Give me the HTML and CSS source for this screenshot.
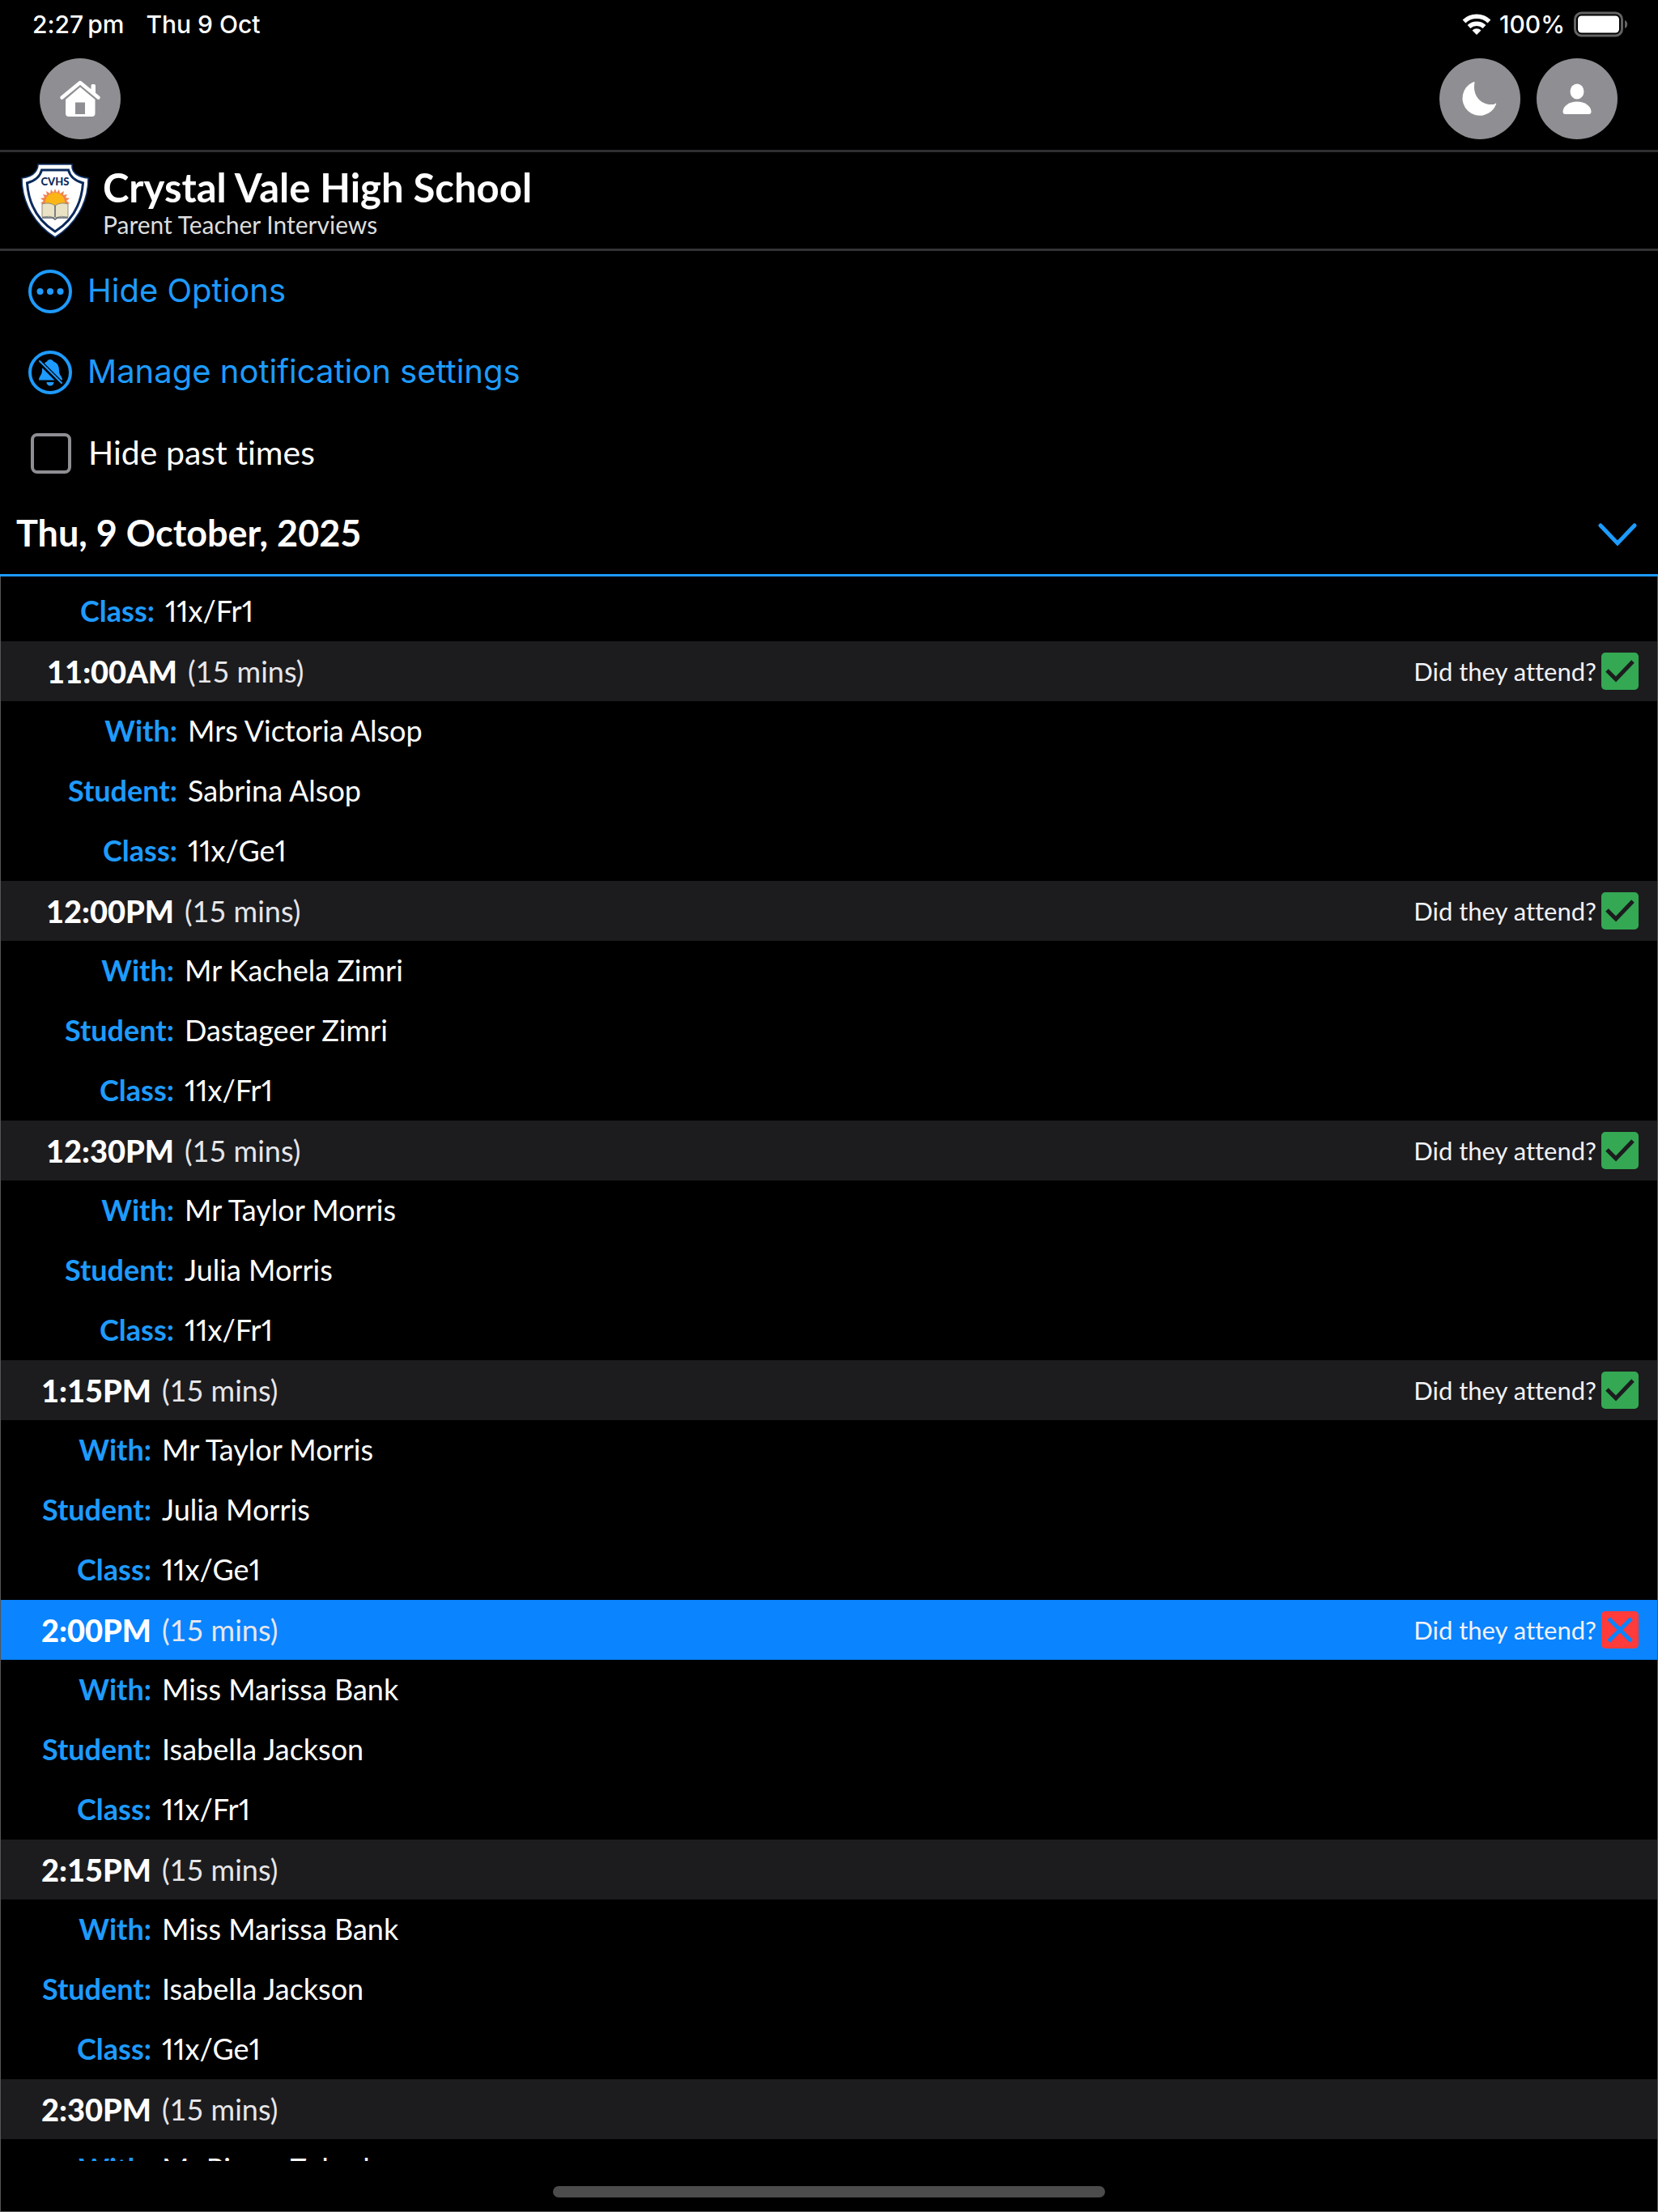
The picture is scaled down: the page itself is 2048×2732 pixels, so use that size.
FILE: index.html
```
<!DOCTYPE html>
<html lang="en">
<head>
    <meta charset="utf-8">
    <meta name="viewport" content="width=device-width,initial-scale=1">
    <title>Parent Teacher Interviews</title>
    <link rel="stylesheet" href="styles.css">
</head>
<body>
<div class="statusbar">
    <span class="clock">2:27&#8198;pm</span>
    <span class="day">Thu 9 Oct</span>
    <svg class="wifi" viewBox="0 0 36 27" width="36" height="27">
        <path d="M2.500 9.500a22.500 22.500 0 0 1 31 0M8.500 16a14 14 0 0 1 19 0" fill="none" stroke="#fff" stroke-width="5.500"/>
        <path d="M18 26l-5.500-5.500a8 8 0 0 1 11 0z" fill="#fff"/>
    </svg>
    <span class="percent">100%</span>
    <svg class="battery" viewBox="0 0 68 32" width="68" height="32">
        <rect x="1.500" y="2" width="58" height="28" rx="8" fill="none" stroke="#636363" stroke-width="3"/>
        <rect x="5" y="5.500" width="51" height="21" rx="4.500" fill="#fff"/>
        <path d="M63 11a5.500 5.500 0 0 1 0 10z" fill="#636363"/>
    </svg>
</div>

<nav class="toolbar">
    <button class="round" aria-label="Home">
        <svg viewBox="0 0 100 100" width="100" height="100">
            <path d="M27.500 48.500L50 30l22.500 18.500" fill="none" stroke="#fff" stroke-width="4.500" stroke-linecap="round" stroke-linejoin="round"/>
            <path d="M63.500 34q0-2 1.500-2h2q2 0 2 2v11l-5.500-4.500z" fill="#fff"/>
            <path d="M50 35.500L68.500 51v17q0 4-4 4h-28.500q-4 0-4-4V51z" fill="#fff"/>
            <path d="M44 54.500h12V69H44z" fill="#8e8e93"/>
        </svg>
    </button>
    <button class="round push" aria-label="Dark mode">
        <svg viewBox="0 0 100 100" width="100" height="100">
            <path d="M41.500 29.500q2-1 2 .5c-3 15 7 28 22 27q3 0 4-1.500 1-.5.500 1.500A21.500 21.500 0 1 1 41.500 29.500z" fill="#fff"/>
        </svg>
    </button>
    <button class="round" aria-label="Account">
        <svg viewBox="0 0 100 100" width="100" height="100">
            <ellipse cx="50" cy="41" rx="8.500" ry="9.500" fill="#fff"/>
            <path d="M32.500 66c0-7 8-12.500 17.500-12.500S67.500 59 67.500 66q0 3-3 3h-29q-3 0-3-3z" fill="#fff"/>
        </svg>
    </button>
</nav>

<header class="school">
    <svg class="crest" viewBox="0 0 84 92" width="84" height="92">
        <path d="M21 1h42v4q2 11 20 13C83 50 66 76 42 91 18 76 1 50 1 18 19 16 21 5 21 1z" fill="#fff" stroke="#12356b" stroke-width="1.500"/>
        <path d="M25.500 8h33q3 12 18 16c-2 28-14 47-34.500 60C21.500 71 9.500 52 7.500 24q15-4 18-16z" fill="#fff" stroke="#0b2a5b" stroke-width="3"/>
        <path d="M42 31l2 5 3-4 1 5 5-3-1 5 5-1-2 4 5 1-4 3 4 3-5 2 3 4H26l3-4-5-2 4-3-4-3 5-1-2-4 5 1-1-5 5 3 1-5 3 4z" fill="#f08350"/>
        <circle cx="42" cy="48" r="12" fill="#fbb615"/>
        <path d="M26 50q9-3 16 2 7-5 16-2v16q-9-2-16 1-7-3-16-1z" fill="#e9e2c4" stroke="#8e8b7c"/>
        <path d="M42 52v14M26 67h13l3 2 3-2h13" fill="none" stroke="#55606c" stroke-width="1.500"/>
        <text x="42" y="27" text-anchor="middle" class="crest-text">CVHS</text>
    </svg>
    <div>
        <h1>Crystal Vale High School</h1>
        <p>Parent Teacher Interviews</p>
    </div>
</header>

<div class="options">
    <button class="option">
        <svg viewBox="0 0 54 54" width="54" height="54">
            <circle cx="27" cy="27" r="25" fill="none" stroke="#1e9bff" stroke-width="4"/>
            <g fill="#1e9bff"><circle cx="14.500" cy="27" r="4"/><circle cx="27" cy="27" r="4"/><circle cx="39.500" cy="27" r="4"/></g>
        </svg>
        <span>Hide Options</span>
    </button>
    <button class="option">
        <svg viewBox="0 0 54 54" width="54" height="54">
            <circle cx="27" cy="27" r="25" fill="none" stroke="#1e9bff" stroke-width="4"/>
            <path d="M27 11c2 0 3.500 1 4 2.500 5 1.500 7 6 7 11 0 7 4 7 4 12H13c0-5 4-6 4-12 0-5 2-9.500 6-11 .5-1.500 2-2.500 4-2.500zM22.500 39h9a4.500 4.500 0 0 1-9 0z" fill="#1e9bff"/>
            <path d="M12 12l29 29" stroke="#000" stroke-width="6"/>
            <path d="M14 13l27 27" stroke="#1e9bff" stroke-width="2" stroke-linecap="round"/>
        </svg>
        <span>Manage notification settings</span>
    </button>
    <label class="option past"><input type="checkbox"><span>Hide past times</span></label>
</div>

<button class="date">
    <span>Thu, 9 October, 2025</span>
    <svg viewBox="0 0 48 30" width="48" height="30">
        <path d="M3 4l21 22L45 4" fill="none" stroke="#1e9bff" stroke-width="5" stroke-linecap="round"/>
    </svg>
</button>

<main class="list">
    <section class="slot am">
        <dl>
            <dt>Class:</dt><dd>11x/Fr1</dd>
        </dl>
    </section>
    <section class="slot long am">
        <div class="bar">
            <h2>11:00AM</h2><span class="mins">(15 mins)</span>
            <label class="attend">Did they attend?
                <span class="tick"><input type="checkbox" checked><svg viewBox="0 0 46 46"><path d="M7 22l11 11 21-22"/></svg></span>
            </label>
        </div>
        <dl>
            <dt>With:</dt><dd>Mrs Victoria Alsop</dd>
            <dt>Student:</dt><dd>Sabrina Alsop</dd>
            <dt>Class:</dt><dd>11x/Ge1</dd>
        </dl>
    </section>
    <section class="slot long">
        <div class="bar">
            <h2>12:00PM</h2><span class="mins">(15 mins)</span>
            <label class="attend">Did they attend?
                <span class="tick"><input type="checkbox" checked><svg viewBox="0 0 46 46"><path d="M7 22l11 11 21-22"/></svg></span>
            </label>
        </div>
        <dl>
            <dt>With:</dt><dd>Mr Kachela Zimri</dd>
            <dt>Student:</dt><dd>Dastageer Zimri</dd>
            <dt>Class:</dt><dd>11x/Fr1</dd>
        </dl>
    </section>
    <section class="slot long">
        <div class="bar">
            <h2>12:30PM</h2><span class="mins">(15 mins)</span>
            <label class="attend">Did they attend?
                <span class="tick"><input type="checkbox" checked><svg viewBox="0 0 46 46"><path d="M7 22l11 11 21-22"/></svg></span>
            </label>
        </div>
        <dl>
            <dt>With:</dt><dd>Mr Taylor Morris</dd>
            <dt>Student:</dt><dd>Julia Morris</dd>
            <dt>Class:</dt><dd>11x/Fr1</dd>
        </dl>
    </section>
    <section class="slot">
        <div class="bar">
            <h2>1:15PM</h2><span class="mins">(15 mins)</span>
            <label class="attend">Did they attend?
                <span class="tick"><input type="checkbox" checked><svg viewBox="0 0 46 46"><path d="M7 22l11 11 21-22"/></svg></span>
            </label>
        </div>
        <dl>
            <dt>With:</dt><dd>Mr Taylor Morris</dd>
            <dt>Student:</dt><dd>Julia Morris</dd>
            <dt>Class:</dt><dd>11x/Ge1</dd>
        </dl>
    </section>
    <section class="slot now">
        <div class="bar">
            <h2>2:00PM</h2><span class="mins">(15 mins)</span>
            <label class="attend">Did they attend?
                <span class="tick"><input type="checkbox"><svg viewBox="0 0 46 46"><path d="M9 9l28 28M37 9L9 37"/></svg></span>
            </label>
        </div>
        <dl>
            <dt>With:</dt><dd>Miss Marissa Bank</dd>
            <dt>Student:</dt><dd>Isabella Jackson</dd>
            <dt>Class:</dt><dd>11x/Fr1</dd>
        </dl>
    </section>
    <section class="slot">
        <div class="bar">
            <h2>2:15PM</h2><span class="mins">(15 mins)</span>
        </div>
        <dl>
            <dt>With:</dt><dd>Miss Marissa Bank</dd>
            <dt>Student:</dt><dd>Isabella Jackson</dd>
            <dt>Class:</dt><dd>11x/Ge1</dd>
        </dl>
    </section>
    <section class="slot">
        <div class="bar">
            <h2>2:30PM</h2><span class="mins">(15 mins)</span>
        </div>
        <dl>
            <dt>With:</dt><dd>Mr Pierre Zebedee</dd>
        </dl>
    </section>
</main>

<footer class="home"><span></span></footer>
</body>
</html>
```
FILE: styles.css
```
*{box-sizing:border-box;}
body{display:flex;flex-direction:column;height:100vh;margin:0;overflow:hidden;background:#000;color:#fff;font-family:Lato,"Open Sans",sans-serif;font-size:36px;font-variant-ligatures:none;}
h1,h2,p,dl,dd{margin:0;}
svg{display:block;flex:none;}
button{border:0;padding:0;background:none;cursor:pointer;}

.statusbar{display:flex;align-items:center;height:60px;padding:0 36px 0 40px;font-family:Inter,"Liberation Sans",sans-serif;font-size:30px;font-weight:500;}
.day{margin-left:27px;}
.wifi{margin-left:auto;}
.percent{margin:0 11px 0 10px;}

.toolbar{display:flex;gap:20px;height:128px;padding:12px 50px 0 49px;border-bottom:3px solid #2f2f31;}
.round{width:100px;height:100px;border-radius:50%;background:#8e8e93;}
.push{margin-left:auto;}

.school{display:flex;align-items:center;gap:17px;height:122px;padding:0 26px;border-bottom:3px solid #333335;}
.school div{padding-top:5px;}
.crest-text{fill:#0b2a5b;font-size:13px;font-weight:900;}
h1{font-size:49px;line-height:54px;font-weight:700;}
.school p{font-size:30px;line-height:38px;color:#ddd;}

.option{display:flex;align-items:center;gap:19px;width:100%;height:100px;padding:0 35px;color:#1e9bff;font-family:Inter,"Liberation Sans",sans-serif;font-size:40px;}
.option span,.date span{padding-bottom:3px;}
.past{padding:0 38px;gap:21px;color:#fff;font-family:Lato,sans-serif;font-size:41px;}
.past input{appearance:none;width:50px;height:50px;margin:0;border:4px solid #8e8e93;border-radius:8px;}

.date{display:flex;align-items:center;justify-content:space-between;height:102px;padding:0 26px 0 20px;border-bottom:3px solid #1e9bff;color:#fff;font-family:Lato,sans-serif;font-size:45px;font-weight:700;}

.list{flex:1;min-height:0;overflow:hidden;padding-top:6px;border:solid #555;border-width:0 1px;}
.slot{--label:186px;}
.slot.am{--label:190px;}
.slot.long{--label:214px;}
.slot.long.am{--label:218px;}
.bar,dl{display:grid;grid-template-columns:var(--label) 1fr;column-gap:13px;align-items:center;}
.bar{grid-template-columns:var(--label) 1fr auto;height:74px;padding-right:23px;background:#1c1c1e;}
.now .bar{background:#0a84ff;}
h2{font-size:38px;font-weight:900;text-align:right;}
.mins{color:#e6e6ea;}
dl{grid-auto-rows:74px;}
dt,dd{padding-bottom:3px;}
dd{font-variant-numeric:proportional-nums;}
dt{color:#1e9bff;font-weight:700;text-align:right;}

.attend{display:flex;align-items:center;gap:6px;font-size:31px;color:#f2f2f6;}
.tick{display:grid;width:46px;height:46px;}
.tick input,.tick svg{grid-area:1/1;width:46px;height:46px;margin:0;}
.tick input{appearance:none;border-radius:5px;background:#ff3b3b;}
.tick input:checked{background:#34a853;}
.tick svg{fill:none;stroke:#1c1c1e;stroke-width:5;pointer-events:none;}
.now .tick svg{stroke:#0a84ff;}

.home{display:flex;justify-content:center;align-items:center;height:63px;padding-top:13px;border:solid #555;border-width:0 1px 1px;}
.home span{width:33.3%;height:14px;border-radius:7px;background:#4c4c4c;}
```
